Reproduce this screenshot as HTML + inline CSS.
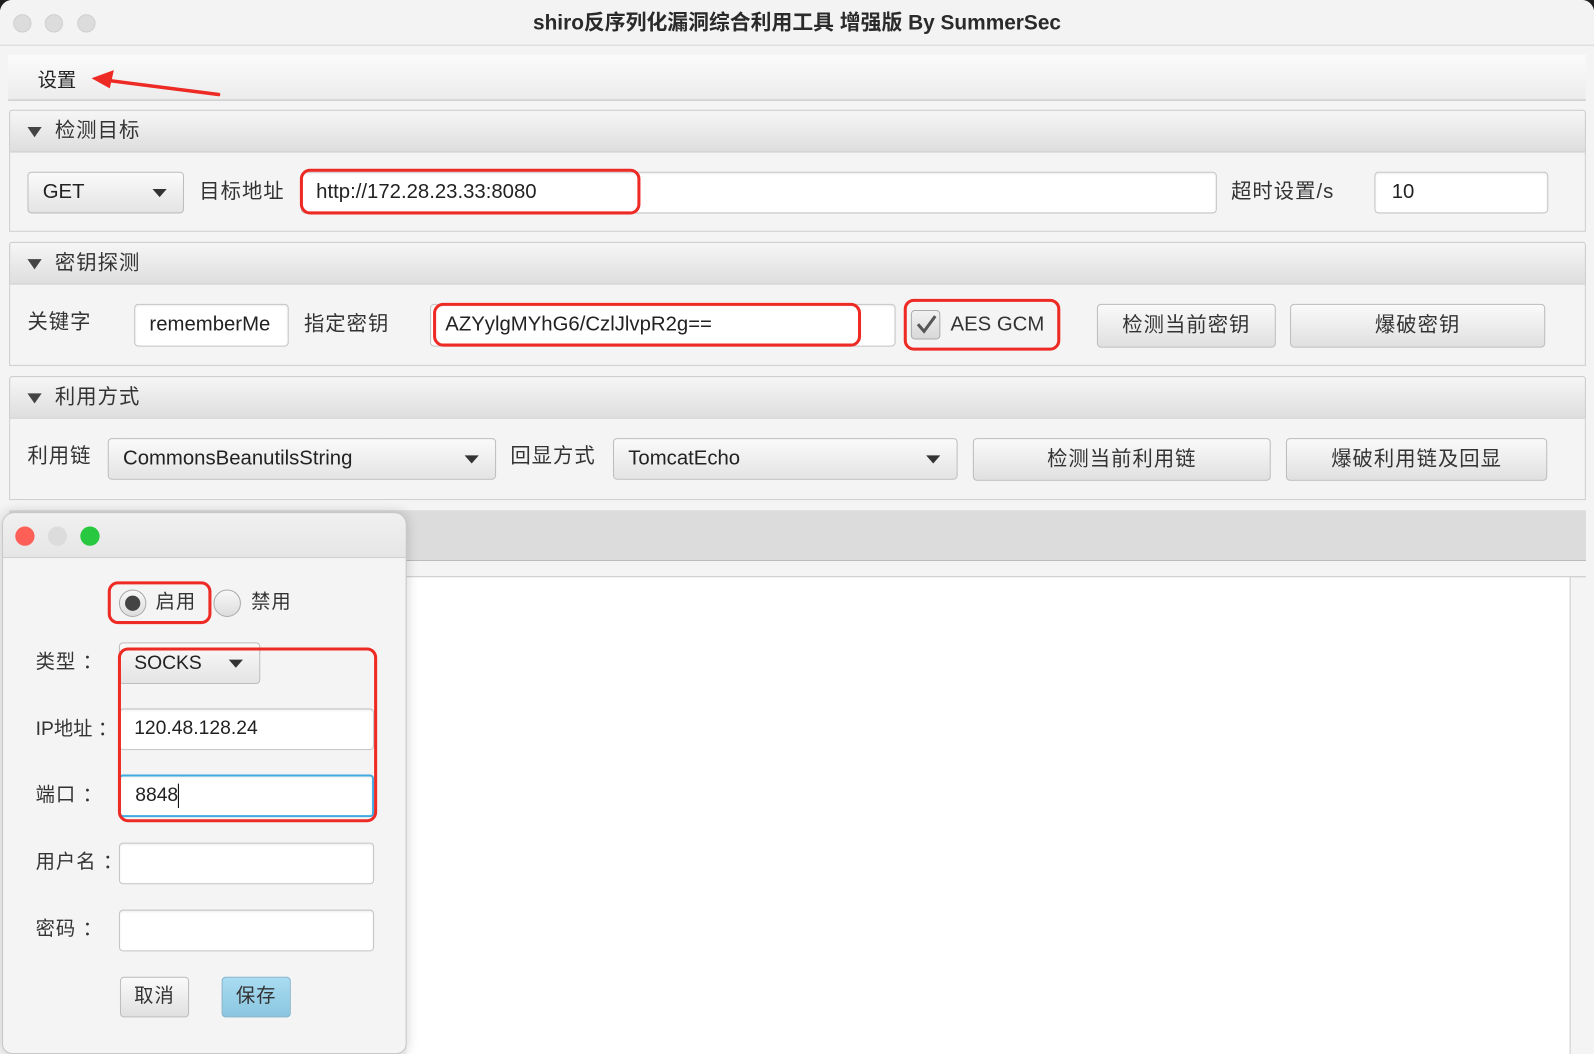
<!DOCTYPE html>
<html><head><meta charset="utf-8"><style>
*{box-sizing:border-box;margin:0;padding:0}
html,body{width:1594px;height:1054px;overflow:hidden;background:#1e1e1e}
body{font-family:"Liberation Sans","Noto Sans CJK SC",sans-serif;color:#222}
#w{position:absolute;left:0;top:0;width:1568px;height:1037px;transform:scale(1.01658,1.01640);transform-origin:0 0}
.a{position:absolute}
.win{left:0;top:0;width:1568px;height:1037px;background:#f4f4f4;border-radius:12px 12px 0 0;overflow:hidden}
.title{left:0;top:0;width:1568px;height:45px;background:#f3f3f3;border-bottom:1px solid #d6d6d6;text-align:center;font-weight:bold;font-size:20.5px;line-height:45px;color:#2a2a2a}
.dot{width:18px;height:18px;border-radius:50%;background:#dcdcdc;border:1px solid #cfcfcf}
.menu{left:8px;top:54px;width:1552px;height:45px;background:linear-gradient(#fbfbfb,#ececec);border-bottom:1px solid #bdbdbd;font-size:19px}
.hdr{left:9px;width:1551px;height:42px;background:linear-gradient(#f6f6f6,#dedede);border:1px solid #c9c9c9;border-radius:3px 3px 0 0;font-size:20px;line-height:40px;padding-left:44px;color:#333;letter-spacing:1px}
.hdr:before{content:"";position:absolute;left:17px;top:16px;border-left:7px solid transparent;border-right:7px solid transparent;border-top:10px solid #444}
.body{left:9px;width:1551px;background:#f4f4f4;border:1px solid #cfcfcf;border-top:none}
.lbl{font-size:20px;color:#333;line-height:24px;letter-spacing:1px}
.fld{background:#fff;border:1px solid #c4c4c4;border-radius:4px;font-size:20px;line-height:38px;padding-left:14px;color:#222;box-shadow:inset 0 1px 2px rgba(0,0,0,.08)}
.cmb{background:linear-gradient(#fafafa,#e4e4e4);border:1px solid #bdbdbd;border-radius:4px;font-size:20px;line-height:38px;padding-left:14px;color:#222}
.cmb:after{content:"";position:absolute;right:16px;top:16px;border-left:7px solid transparent;border-right:7px solid transparent;border-top:8px solid #333}
.btn{background:linear-gradient(#fafafa,#e0e0e0);border:1px solid #bcbcbc;border-radius:4px;font-size:20px;text-align:center;color:#333;letter-spacing:1px}
.red{border:3px solid #ee2a24;border-radius:10px}
</style></head><body><div id="w">
<div class="a win">
 <div class="a title">shiro反序列化漏洞综合利用工具 增强版 By SummerSec</div>
 <div class="a dot" style="left:13px;top:14px"></div>
 <div class="a dot" style="left:44px;top:14px"></div>
 <div class="a dot" style="left:76px;top:14px"></div>
 <div class="a menu"><span class="a" style="left:29px;top:10px">设置</span></div>
 <svg class="a" style="left:80px;top:65px" width="145" height="40"><line x1="135" y1="28" x2="25" y2="14" stroke="#ee2a24" stroke-width="3.5" stroke-linecap="round"/><polygon points="10,12 32,4 28,22" fill="#ee2a24"/></svg>

 <div class="a hdr" style="top:108px">检测目标</div>
 <div class="a body" style="top:150px;height:78px"></div>
 <div class="a cmb" style="left:27px;top:169px;width:154px;height:41px">GET</div>
 <div class="a lbl" style="left:196px;top:177px">目标地址</div>
 <div class="a fld" style="left:296px;top:169px;width:901px;height:41px">http://172.28.23.33:8080</div>
 <div class="a red" style="left:295px;top:166px;width:335px;height:45px"></div>
 <div class="a lbl" style="left:1211px;top:177px">超时设置/s</div>
 <div class="a fld" style="left:1352px;top:169px;width:171px;height:41px;padding-left:16px">10</div>

 <div class="a hdr" style="top:238px">密钥探测</div>
 <div class="a body" style="top:280px;height:80px"></div>
 <div class="a lbl" style="left:27px;top:305px">关键字</div>
 <div class="a fld" style="left:132px;top:299px;width:152px;height:42px">rememberMe</div>
 <div class="a lbl" style="left:299px;top:307px">指定密钥</div>
 <div class="a fld" style="left:423px;top:299px;width:458px;height:42px">AZYylgMYhG6/CzlJlvpR2g==</div>
 <div class="a red" style="left:426px;top:298px;width:421px;height:43px"></div>
 <div class="a red" style="left:889px;top:294px;width:154px;height:51px"></div>
 <div class="a" style="left:896px;top:305px;width:29px;height:29px;border:1px solid #aaa;border-radius:4px;background:linear-gradient(#f2f2f2,#d8d8d8)"></div>
 <svg class="a" style="left:898px;top:306px" width="26" height="26"><path d="M5 13 L11 20 L22 5" stroke="#555" stroke-width="3" fill="none"/></svg>
 <div class="a lbl" style="left:935px;top:307px;letter-spacing:0">AES GCM</div>
 <div class="a btn" style="left:1079px;top:299px;width:176px;height:43px;line-height:41px">检测当前密钥</div>
 <div class="a btn" style="left:1269px;top:299px;width:251px;height:43px;line-height:41px">爆破密钥</div>

 <div class="a hdr" style="top:370px">利用方式</div>
 <div class="a body" style="top:412px;height:80px"></div>
 <div class="a lbl" style="left:27px;top:437px">利用链</div>
 <div class="a cmb" style="left:106px;top:431px;width:382px;height:41px">CommonsBeanutilsString</div>
 <div class="a lbl" style="left:502px;top:437px">回显方式</div>
 <div class="a cmb" style="left:603px;top:431px;width:339px;height:41px">TomcatEcho</div>
 <div class="a btn" style="left:957px;top:431px;width:293px;height:42px;line-height:40px">检测当前利用链</div>
 <div class="a btn" style="left:1265px;top:431px;width:257px;height:42px;line-height:40px">爆破利用链及回显</div>

 <div class="a" style="left:9px;top:502px;width:1551px;height:50px;background:#dcdcdc;border-bottom:1px solid #bbb"></div>
 <div class="a" style="left:9px;top:552px;width:1551px;height:16px;background:#f4f4f4;border-bottom:1px solid #c4c4c4"></div>
 <div class="a" style="left:400px;top:568px;width:1145px;height:469px;background:#fff;border-right:1px solid #ccc"></div>
</div>

<div class="a" style="left:2px;top:504px;width:398px;height:533px;background:#f4f4f4;border:1px solid #c8c8c8;border-radius:12px 12px 10px 10px;box-shadow:0 0 12px rgba(0,0,0,.18);overflow:hidden">
 <div class="a" style="left:0;top:0;width:398px;height:44px;background:linear-gradient(#f0f0f0,#e6e6e6);border-bottom:1px solid #cfcfcf"></div>
 <div class="a" style="left:12px;top:13px;width:19px;height:19px;border-radius:50%;background:#fe5f57"></div>
 <div class="a" style="left:44px;top:13px;width:19px;height:19px;border-radius:50%;background:#dcdcdc"></div>
 <div class="a" style="left:76px;top:13px;width:19px;height:19px;border-radius:50%;background:#28c840"></div>
</div>
<div class="a red" style="left:106px;top:572px;width:102px;height:42px"></div>
<div class="a" style="left:117px;top:580px;width:27px;height:27px;border-radius:50%;border:1px solid #aaa;background:linear-gradient(#f8f8f8,#ddd)"></div>
<div class="a" style="left:123px;top:586px;width:15px;height:15px;border-radius:50%;background:#444"></div>
<div class="a lbl" style="left:153px;top:581px;font-size:19px">启用</div>
<div class="a" style="left:210px;top:580px;width:27px;height:27px;border-radius:50%;border:1px solid #aaa;background:linear-gradient(#f8f8f8,#ddd)"></div>
<div class="a lbl" style="left:247px;top:581px;font-size:19px">禁用</div>

<div class="a lbl" style="left:35px;top:640px;font-size:19px">类型 ：</div>
<div class="a cmb" style="left:117px;top:632px;width:139px;height:41px;font-size:19px;line-height:40px">SOCKS</div>
<div class="a lbl" style="left:35px;top:706px;font-size:19px;letter-spacing:0">IP地址 ：</div>
<div class="a fld" style="left:117px;top:697px;width:251px;height:41px;font-size:19px">120.48.128.24</div>
<div class="a lbl" style="left:35px;top:771px;font-size:19px">端口 ：</div>
<div class="a fld" style="left:117px;top:762px;width:251px;height:42px;font-size:19px;border:2px solid #3fa9e0">8848<span style="display:inline-block;width:1px;height:24px;background:#000;vertical-align:middle"></span></div>
<div class="a red" style="left:116px;top:637px;width:255px;height:172px"></div>
<div class="a lbl" style="left:35px;top:837px;font-size:19px">用户名 ：</div>
<div class="a fld" style="left:117px;top:829px;width:251px;height:41px"></div>
<div class="a lbl" style="left:35px;top:903px;font-size:19px">密码 ：</div>
<div class="a fld" style="left:117px;top:895px;width:251px;height:41px"></div>
<div class="a btn" style="left:118px;top:961px;width:68px;height:40px;line-height:38px;font-size:19px">取消</div>
<div class="a btn" style="left:218px;top:961px;width:68px;height:40px;line-height:38px;font-size:19px;background:linear-gradient(#a9dcf1,#8ac6e0);border-color:#7fb1c9">保存</div>
</div></body></html>
